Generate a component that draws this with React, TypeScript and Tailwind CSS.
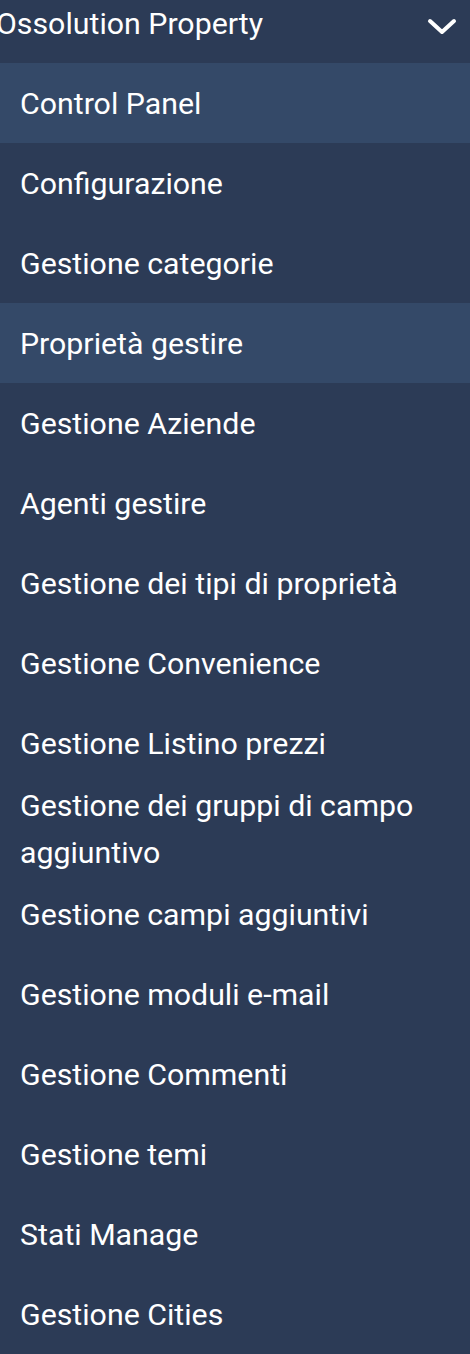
const items = [
  { label: 'Control Panel', active: true },
  { label: 'Configurazione' },
  { label: 'Gestione categorie' },
  { label: 'Proprietà gestire', active: true },
  { label: 'Gestione Aziende' },
  { label: 'Agenti gestire' },
  { label: 'Gestione dei tipi di proprietà' },
  { label: 'Gestione Convenience' },
  { label: 'Gestione Listino prezzi' },
  { label: 'Gestione dei gruppi di campo aggiuntivo', tall: true },
  { label: 'Gestione campi aggiuntivi' },
  { label: 'Gestione moduli e-mail' },
  { label: 'Gestione Commenti' },
  { label: 'Gestione temi' },
  { label: 'Stati Manage' },
  { label: 'Gestione Cities' },
];

export default function App() {
  return (
    <div className="w-[470px] h-[1354px] overflow-hidden bg-[#2c3b56] text-white font-['Roboto',sans-serif]">
      <div className="h-[63px] flex items-center justify-between pr-[13px] pb-[10px]">
        <span className="-ml-[4px] -mt-[4px] text-[30.3px] leading-none">Ossolution Property</span>
        <svg width="30" height="18" viewBox="0 0 30 18" fill="none">
          <polyline
            points="3,3 15,14 27,3"
            stroke="white"
            strokeWidth="4"
            strokeLinecap="round"
            strokeLinejoin="round"
          />
        </svg>
      </div>

      <ul>
        {items.map((item) => (
          <li
            key={item.label}
            className={`flex items-center px-[20px] text-[30.3px] leading-[47px] ${
              item.tall ? 'h-[91px]' : 'h-[80px]'
            } ${item.active ? 'bg-[#344968]' : ''}`}
          >
            {item.label}
          </li>
        ))}
      </ul>
    </div>
  );
}
